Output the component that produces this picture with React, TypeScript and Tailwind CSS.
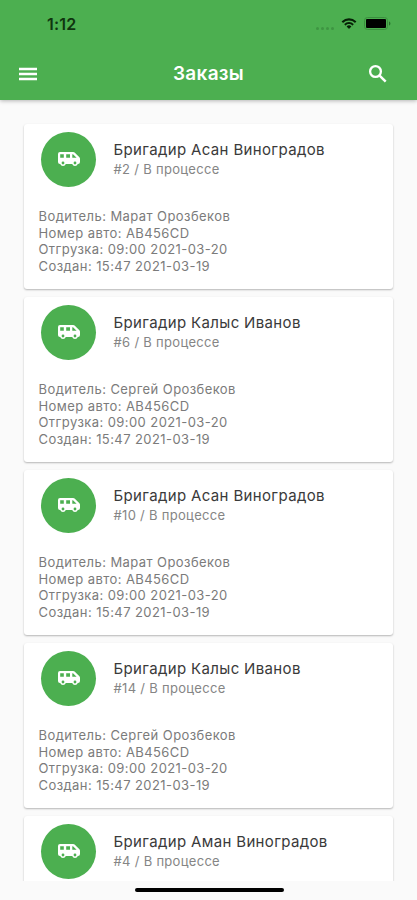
interface Order {
  id: number
  foreman: string
  driver: string
}

const ORDERS: Order[] = [
  { id: 2, foreman: "Асан Виноградов", driver: "Марат Орозбеков" },
  { id: 6, foreman: "Калыс Иванов", driver: "Сергей Орозбеков" },
  { id: 10, foreman: "Асан Виноградов", driver: "Марат Орозбеков" },
  { id: 14, foreman: "Калыс Иванов", driver: "Сергей Орозбеков" },
]

const NEXT_ORDER: Order = { id: 4, foreman: "Аман Виноградов", driver: "Марат Орозбеков" }

// Rounded van; windows and hubs are cut out of the body with even-odd fill.
function ShuttleIcon() {
  return (
    <svg width="24" height="24" viewBox="0 0 24 24" fill="currentColor" fillRule="evenodd">
      <path d="M3 5h13.200c.5 0 1 .2 1.400.6l4.800 4.700c.4.4.6.9.6 1.400V15a2 2 0 0 1-2 2h-.2a3 3 0 0 1-5.600 0H8.800a3 3 0 0 1-5.600 0H3a2 2 0 0 1-2-2V7a2 2 0 0 1 2-2zM3.200 7.200v3.600h3.600V7.200zM9.200 7.200v3.600h3.800V7.200zM15.300 7.200v3.600h4.300L16 7.200zM6 14.600a1.400 1.400 0 1 0 0 2.800 1.400 1.400 0 0 0 0-2.800zM18 14.600a1.400 1.400 0 1 0 0 2.800 1.400 1.400 0 0 0 0-2.800z" />
    </svg>
  )
}

function MenuIcon() {
  return (
    <svg width="24" height="24" viewBox="0 0 24 24" fill="none" stroke="currentColor" strokeWidth="2.300">
      <path d="M3 7h18M3 12h18M3 17h18" />
    </svg>
  )
}

function SearchIcon() {
  return (
    <svg width="24" height="24" viewBox="0 0 24 24" fill="none" stroke="currentColor" strokeWidth="2.300">
      <circle cx="9.500" cy="9.500" r="5.400" />
      <path d="M13.600 13.600l6.100 6.100" strokeWidth="2.500" />
    </svg>
  )
}

function StatusBar() {
  return (
    <div className="flex h-[47px] items-center pl-[47px] pr-[26px]">
      <span className="text-[16px] font-semibold leading-5 tracking-[0.2px] text-[#10340f]">1:12</span>
      <div className="ml-auto flex items-center">
        <div className="mr-[7px] mt-[9px] flex gap-[2px]">
          {[0, 1, 2, 3].map((n) => (
            <span key={n} className="size-[3px] rounded-full bg-[#3e9542]" />
          ))}
        </div>
        <svg width="16" height="12" viewBox="0 0 16 12" className="mr-[7px] fill-[#062006]">
          <path d="M8 2.500c2.200 0 4.200.8 5.700 2.300.1.1.3.1.4 0l1.100-1.100c.1-.1.1-.3 0-.4a10.300 10.300 0 0 0-14.400 0c-.1.1-.1.3 0 .4l1.100 1.100c.1.1.3.1.4 0A8.200 8.200 0 0 1 8 2.500z" />
          <path d="M8 6.100c1.200 0 2.400.5 3.200 1.300.1.1.3.1.4 0l1.100-1.100c.1-.1.1-.3 0-.4a6.800 6.800 0 0 0-9.400 0c-.1.1-.1.3 0 .4l1.100 1.100c.1.1.3.1.4 0C5.600 6.600 6.800 6.100 8 6.100z" />
          <path d="M10.200 8.700c.1-.1.1-.3 0-.4a3.400 3.400 0 0 0-4.400 0c-.1.1-.1.300 0 .4l2 2c.1.1.3.1.4 0z" />
        </svg>
        <svg width="27" height="13" viewBox="0 0 27 13">
          <rect x="0.500" y="0.500" width="23" height="12" rx="3" fill="none" stroke="#3b8f3e" />
          <rect x="2" y="2" width="20" height="9" rx="1" fill="#000" />
          <path d="M25 4.500v4c.8-.3 1.400-1.100 1.400-2s-.6-1.700-1.400-2z" fill="#28702c" />
        </svg>
      </div>
    </div>
  )
}

function AppBar() {
  return (
    <header className="relative z-10 h-[100px] shrink-0 bg-[#4caf50] shadow-[0_1px_4px_rgba(0,0,0,0.28)]">
      <StatusBar />
      <div className="grid h-[53px] grid-cols-[1fr_auto_1fr] items-center pl-4 pr-[27px]">
        <button type="button" aria-label="Меню" className="justify-self-start text-white">
          <MenuIcon />
        </button>
        <h1 className="ml-[11px] pt-px text-[19px] font-semibold tracking-[0.3px] text-white">Заказы</h1>
        <button type="button" aria-label="Поиск" className="justify-self-end text-white">
          <SearchIcon />
        </button>
      </div>
    </header>
  )
}

function OrderHeading({ order }: { order: Order }) {
  return (
    <div className="flex pl-[17px] pt-[7.500px]">
      <div className="flex size-[55px] items-center justify-center rounded-full bg-[#4caf50] text-white">
        <ShuttleIcon />
      </div>
      <div className="pl-[17.500px] pt-[7.500px]">
        <h2 className="text-[15px] leading-[21px] tracking-[0.35px] text-[#3a3a3a]">Бригадир {order.foreman}</h2>
        <p className="text-[13px] leading-[19px] tracking-[0.3px] text-[#858585]">
          #{order.id} / В процессе
        </p>
      </div>
    </div>
  )
}

function OrderCard({ order }: { order: Order }) {
  return (
    <article className="h-[165px] shrink-0 rounded-[3px] bg-white shadow-[0_1px_2px_rgba(0,0,0,0.28)]">
      <OrderHeading order={order} />
      <div className="pl-[14.500px] pt-[21.500px] text-[13px] leading-[16.600px] tracking-[0.42px] text-[#7b7b7b]">
        <p>Водитель: {order.driver}</p>
        <p>Номер авто: AB456CD</p>
        <p>Отгрузка: 09:00 2021-03-20</p>
        <p>Создан: 15:47 2021-03-19</p>
      </div>
    </article>
  )
}

export default function App() {
  return (
    <div className="relative flex h-[900px] w-[417px] flex-col overflow-hidden bg-[#fafafa] font-['Inter','Roboto',sans-serif]">
      <AppBar />
      <main className="flex h-[781px] shrink-0 flex-col gap-2 overflow-hidden px-6 pt-6">
        {ORDERS.map((order) => (
          <OrderCard key={order.id} order={order} />
        ))}
        {/* Only the heading of the next order fits above the home indicator. */}
        <article className="h-[70px] shrink-0 rounded-t-[3px] bg-white shadow-[0_1px_2px_rgba(0,0,0,0.28)]">
          <OrderHeading order={NEXT_ORDER} />
        </article>
      </main>
      <div className="absolute bottom-[8px] left-[134.500px] h-[4px] w-[149px] rounded-full bg-black" />
    </div>
  )
}
